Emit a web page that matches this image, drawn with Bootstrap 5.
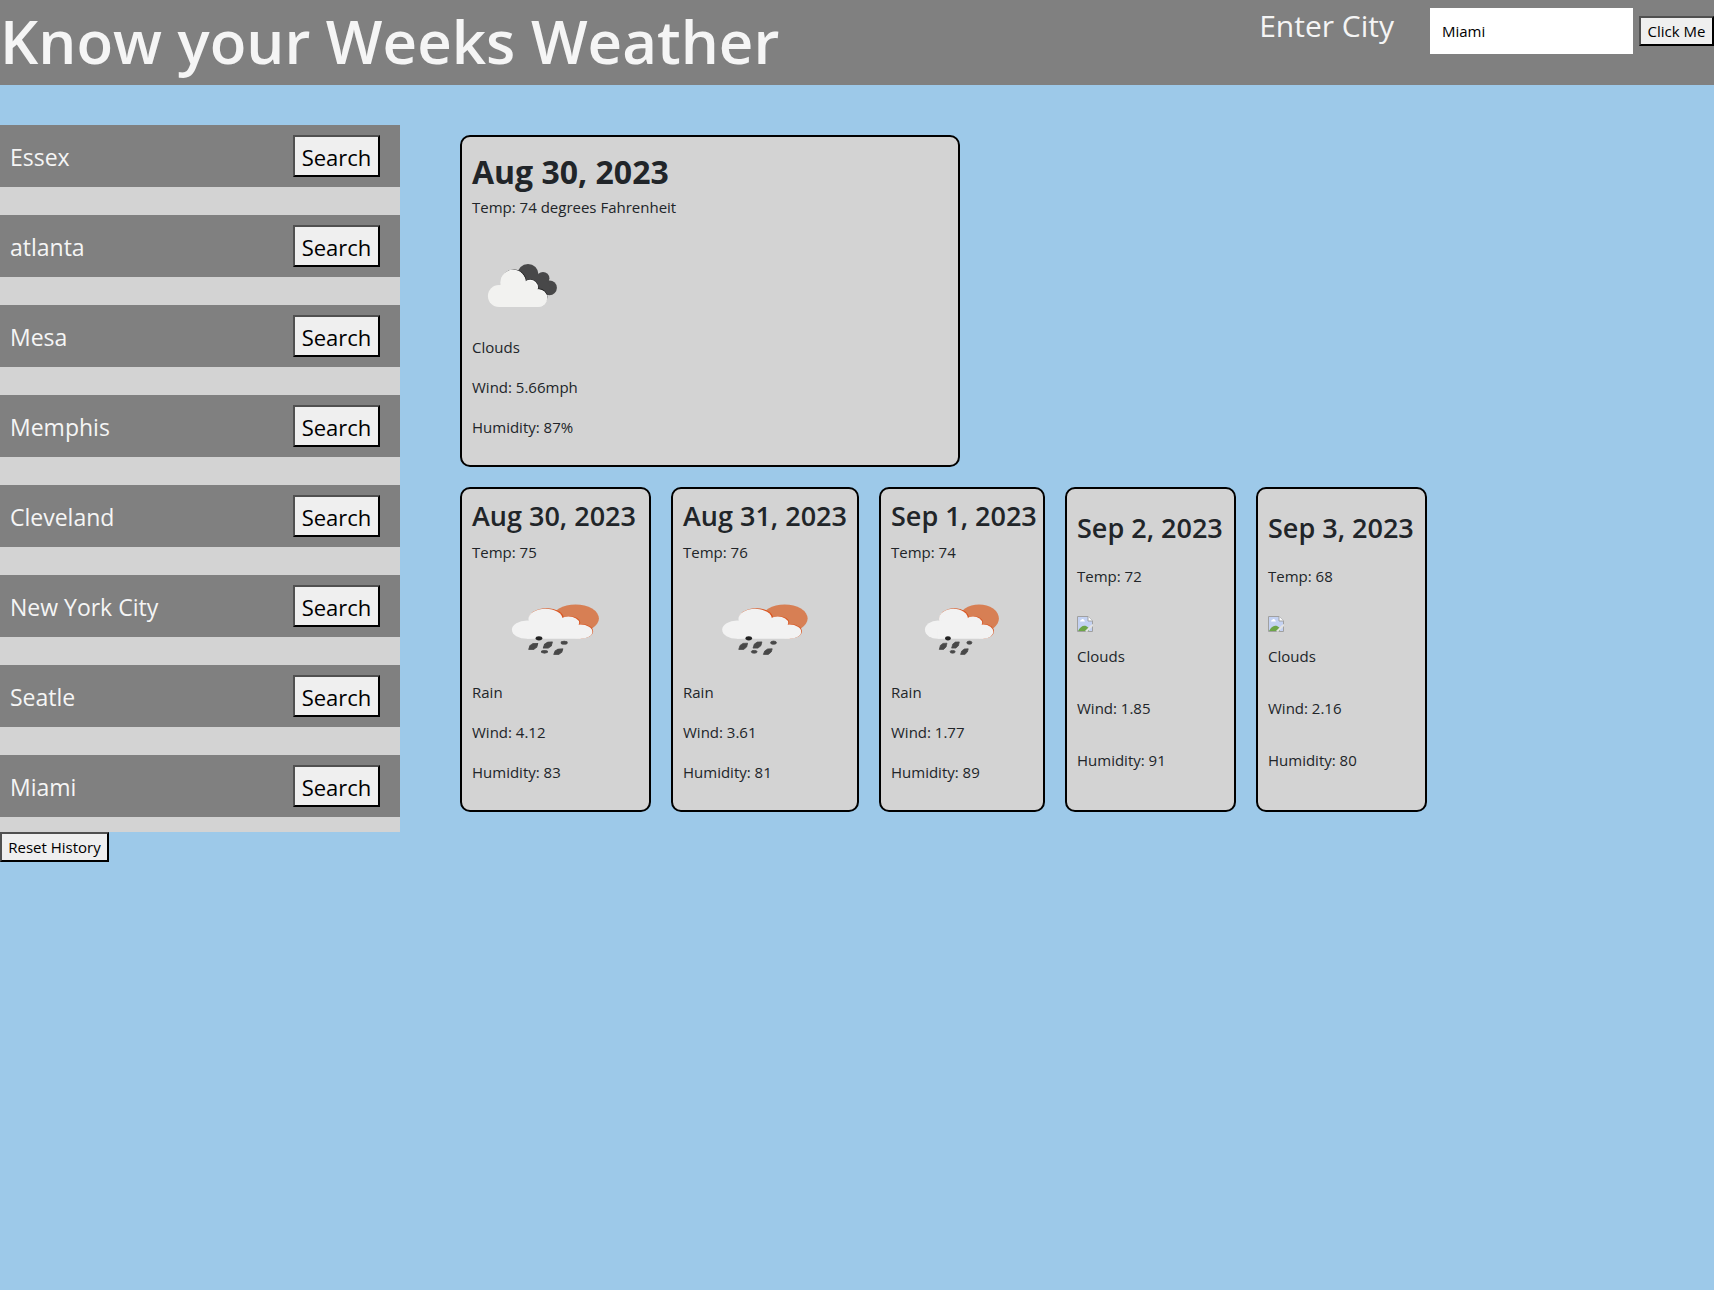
<!DOCTYPE html>
<html lang="en">
<head>
<meta charset="utf-8">
<meta name="viewport" content="width=device-width, initial-scale=1">
<title>Know your Weeks Weather</title>
<link href="https://cdn.jsdelivr.net/npm/bootstrap@5.3.0/dist/css/bootstrap.min.css" rel="stylesheet">
<style>
  body { background: #9dc9e9; font-family: "Open Sans", "Noto Sans", sans-serif; font-size: 15px; line-height: 24px; overflow-x: hidden; }
  .top-bar { background: gray; color: whitesmoke; min-height: 85px; }
  .site-title { font-size: 60px; line-height: 83px; font-weight: 600; }
  .city-label { font-size: 30px; line-height: 38px; margin: 7px 36px 0 0; }
  .city-input { width: 203px; height: 46px; margin: 8px 6px 0 0; padding: 0 12px; border: 0; font-size: 15px; }
  .plain-btn { background: #efefef; color: #000; border: 2px solid; border-color: #505050 #000 #000 #505050; padding: 1px 0; font-size: 15px; line-height: 24px; white-space: nowrap; }
  .go-btn { margin-top: 16px; height: 30px; width: 75px; }
  .reset-btn { width: 109px; }
  .layout { padding-top: 40px; }
  .history { width: 400px; }
  .history-list { background: lightgray; gap: 28px; padding-bottom: 15px; }
  .history-item { background: gray; color: whitesmoke; font-size: 23px; line-height: 36px; padding: 10px 20px 10px 10px; }
  .history-item span { padding-top: 2px; }
  .history-item .plain-btn { font-size: 22px; line-height: 36px; width: 87px; padding: 2px 0 0; }
  .forecast { padding: 10px 0 0 60px; }
  .weather-card { background: lightgray; border: 2px solid #000; border-radius: 10px; padding: 10px; }
  .weather-card p { margin-bottom: 16px; }
  .weather-card .cond-icon { display: block; height: 100px; width: 100%; }
  .today { width: 500px; }
  .today .cond-icon { width: 100px; }
  .today h2 { font-size: 32px; line-height: 46px; font-weight: 700; margin: 0; padding-top: 2px; }
  .days { gap: 20px; }
  .days h3 { font-size: 27px; line-height: 33px; font-weight: 600; margin-bottom: 8px; white-space: nowrap; }
  .day-wide { width: 191px; }
  .day-wide-31 { width: 188px; }
  .day-slim { width: 166px; }
  .day-mid { width: 171px; }
</style>
<script src="https://cdn.jsdelivr.net/npm/bootstrap@5.3.0/dist/js/bootstrap.bundle.min.js"></script>
</head>
<body>
<svg class="d-none" aria-hidden="true">
  <symbol id="rain" viewBox="0 0 100 100" preserveAspectRatio="none">
    <circle cx="62" cy="38.5" r="14" fill="#d77f54"/>
    <g fill="#d9531e"><circle cx="44.6" cy="38.6" r="10.4"/><circle cx="58.4" cy="42.6" r="6.4"/><circle cx="65.3" cy="51.3" r="7.2"/></g>
    <g fill="#f2f2f2"><circle cx="33" cy="49.7" r="9.1"/><circle cx="44" cy="39" r="10.2"/><circle cx="57.8" cy="43" r="6.4"/><circle cx="65" cy="51.7" r="7.1"/><path d="M33 42L44 34 58 42 65 50V58.8H33Z"/></g>
    <g fill="#484848" stroke="#484848" stroke-width=".6" stroke-linejoin="round"><path d="M36.6 63.4L39.4 63.2 38.8 67 37 69.4 34 69.4 34.8 65.4Z"/><path d="M45.3 62.1L48.1 61.9 47.5 65.7 45.7 68.1 42.7 68.1 43.5 64.1Z"/><path d="M51.6 69L54.4 68.8 53.8 72 52 74.4 49 74.4 49.8 71Z"/><ellipse cx="55.2" cy="62.7" rx="1.8" ry="1.6"/><ellipse cx="43.4" cy="71.8" rx="1.8" ry="1.4"/></g>
    <ellipse cx="40.1" cy="58.3" rx="2" ry="2.1" fill="#222"/>
  </symbol>
  <symbol id="clouds" viewBox="0 0 100 100">
    <g fill="#484849"><circle cx="56" cy="39.5" r="10.5"/><circle cx="71" cy="43.3" r="6.4"/><circle cx="77.5" cy="52.8" r="7.4"/><path d="M56 40H70L78 50 77 60H60Z"/></g>
    <g fill="#222"><circle cx="42" cy="46.8" r="12.4"/><circle cx="58.6" cy="52.2" r="7.8"/><circle cx="67" cy="62" r="8.4"/></g>
    <g fill="#fff"><circle cx="41.3" cy="47.2" r="12.4"/><circle cx="58.2" cy="52.6" r="7.8"/><circle cx="66.6" cy="62.8" r="8.6"/></g>
    <g fill="#f2f2f0"><circle cx="27" cy="61" r="11.1"/><circle cx="41" cy="47.7" r="12.6"/><circle cx="57.4" cy="53.4" r="7.8"/><circle cx="66.2" cy="63.3" r="8.8"/><path d="M27 51L42 40 57 51 66 62V72.1H27Z"/></g>
  </symbol>
  <symbol id="missing" viewBox="0 0 16 16">
    <path d="M.5.5H11L15.5 5V15.5H.5Z" fill="#c4d2f2" stroke="#a0a0a0"/>
    <path d="M11 .5V5H15.5" fill="#fff" stroke="#a0a0a0"/>
    <path d="M3 5.5C3 3.8 5 4 5 3 7 2.6 7 4 8 5.5Z" fill="#fff"/>
    <path d="M1 15C3 11 6 9 9 10L12 12V15Z" fill="#6da548"/>
    <path d="M10 16L16 10V8L14 9 8 15Z" fill="#e3e3e3"/>
  </symbol>
</svg>

<header class="top-bar d-flex justify-content-between align-items-start">
  <h1 class="site-title mb-0">Know your Weeks Weather</h1>
  <form class="d-flex align-items-start">
    <label class="city-label" for="city">Enter City</label>
    <input class="city-input" id="city" type="text" value="Miami">
    <button class="plain-btn go-btn" type="button">Click Me</button>
  </form>
</header>

<div class="layout d-flex align-items-start">
  <aside class="history flex-shrink-0">
    <div class="history-list d-flex flex-column">
      <div class="history-item d-flex justify-content-between align-items-center"><span>Essex</span><button class="plain-btn" type="button">Search</button></div>
      <div class="history-item d-flex justify-content-between align-items-center"><span>atlanta</span><button class="plain-btn" type="button">Search</button></div>
      <div class="history-item d-flex justify-content-between align-items-center"><span>Mesa</span><button class="plain-btn" type="button">Search</button></div>
      <div class="history-item d-flex justify-content-between align-items-center"><span>Memphis</span><button class="plain-btn" type="button">Search</button></div>
      <div class="history-item d-flex justify-content-between align-items-center"><span>Cleveland</span><button class="plain-btn" type="button">Search</button></div>
      <div class="history-item d-flex justify-content-between align-items-center"><span>New York City</span><button class="plain-btn" type="button">Search</button></div>
      <div class="history-item d-flex justify-content-between align-items-center"><span>Seatle</span><button class="plain-btn" type="button">Search</button></div>
      <div class="history-item d-flex justify-content-between align-items-center"><span>Miami</span><button class="plain-btn" type="button">Search</button></div>
    </div>
    <button class="plain-btn reset-btn d-block" type="button">Reset History</button>
  </aside>

  <main class="forecast">
    <section class="weather-card today">
      <h2>Aug 30, 2023</h2>
      <p>Temp: 74 degrees Fahrenheit</p>
      <svg class="cond-icon" role="img" aria-label="Clouds"><use href="#clouds"/></svg>
      <p>Clouds</p>
      <p>Wind: 5.66mph</p>
      <p>Humidity: 87%</p>
    </section>
    <div class="days d-flex mt-3 pt-1">
      <section class="weather-card day-wide d-flex flex-column justify-content-evenly">
        <h3>Aug 30, 2023</h3>
        <p>Temp: 75</p>
        <svg class="cond-icon" role="img" aria-label="Rain"><use href="#rain"/></svg>
        <p>Rain</p>
        <p>Wind: 4.12</p>
        <p>Humidity: 83</p>
      </section>
      <section class="weather-card day-wide-31 d-flex flex-column justify-content-evenly">
        <h3>Aug 31, 2023</h3>
        <p>Temp: 76</p>
        <svg class="cond-icon" role="img" aria-label="Rain"><use href="#rain"/></svg>
        <p>Rain</p>
        <p>Wind: 3.61</p>
        <p>Humidity: 81</p>
      </section>
      <section class="weather-card day-slim d-flex flex-column justify-content-evenly">
        <h3>Sep 1, 2023</h3>
        <p>Temp: 74</p>
        <svg class="cond-icon" role="img" aria-label="Rain"><use href="#rain"/></svg>
        <p>Rain</p>
        <p>Wind: 1.77</p>
        <p>Humidity: 89</p>
      </section>
      <section class="weather-card day-mid d-flex flex-column justify-content-evenly">
        <h3>Sep 2, 2023</h3>
        <p>Temp: 72</p>
        <svg width="16" height="16" role="img" aria-label="Missing icon"><use href="#missing"/></svg>
        <p>Clouds</p>
        <p>Wind: 1.85</p>
        <p>Humidity: 91</p>
      </section>
      <section class="weather-card day-mid d-flex flex-column justify-content-evenly">
        <h3>Sep 3, 2023</h3>
        <p>Temp: 68</p>
        <svg width="16" height="16" role="img" aria-label="Missing icon"><use href="#missing"/></svg>
        <p>Clouds</p>
        <p>Wind: 2.16</p>
        <p>Humidity: 80</p>
      </section>
    </div>
  </main>
</div>
</body>
</html>
